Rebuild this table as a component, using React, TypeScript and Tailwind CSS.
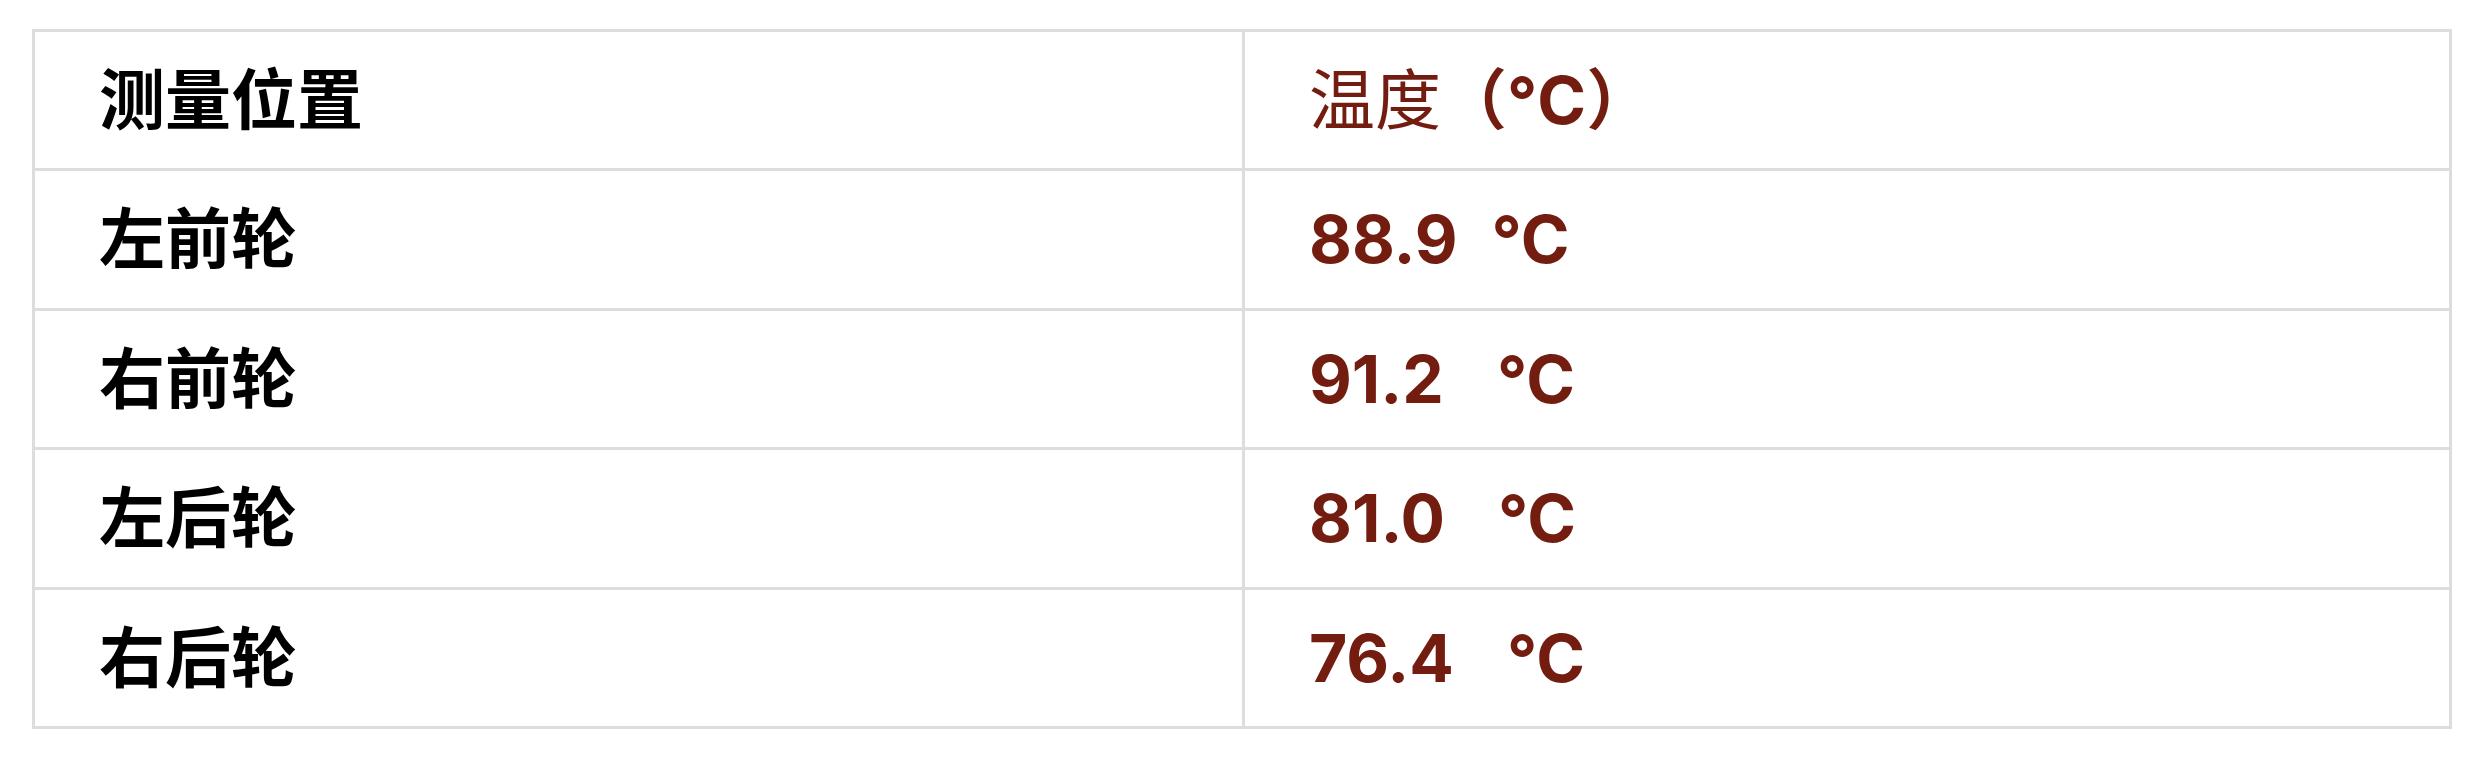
const rows = [
  { position: '左前轮', value: '88.9', unitGap: 'ml-[34px]' },
  { position: '右前轮', value: '91.2', unitGap: 'ml-[53px]' },
  { position: '左后轮', value: '81.0', unitGap: 'ml-[53px]' },
  { position: '右后轮', value: '76.4', unitGap: 'ml-[53px]' },
]

export default function App() {
  return (
    <div
      className="min-h-screen bg-white pt-[29px] pl-[32px]"
      style={{ fontFamily: 'Inter, "Noto Sans CJK SC", sans-serif' }}
    >
      <div className="w-[2420px] border-[3px] border-[#dddddd] text-[66px] leading-none">
        {/* header */}
        <div className="grid h-[136px] grid-cols-2">
          <div className="flex items-center px-16 font-bold text-black">测量位置</div>
          <div className="flex items-center border-l-[3px] border-[#dddddd] px-16 text-[#731c10]">
            <span className="font-normal">温度</span>
            <span className="font-bold">（°C）</span>
          </div>
        </div>

        {rows.map((row) => (
          <div key={row.position} className="grid h-[139.5px] grid-cols-2 border-t-[3px] border-[#dddddd]">
            <div className="flex items-center px-16 font-bold text-black">{row.position}</div>
            <div className="flex items-center border-l-[3px] border-[#dddddd] px-16 font-bold text-[#731c10]">
              <span>{row.value}</span>
              <span className={row.unitGap}>°C</span>
            </div>
          </div>
        ))}
      </div>
    </div>
  )
}
